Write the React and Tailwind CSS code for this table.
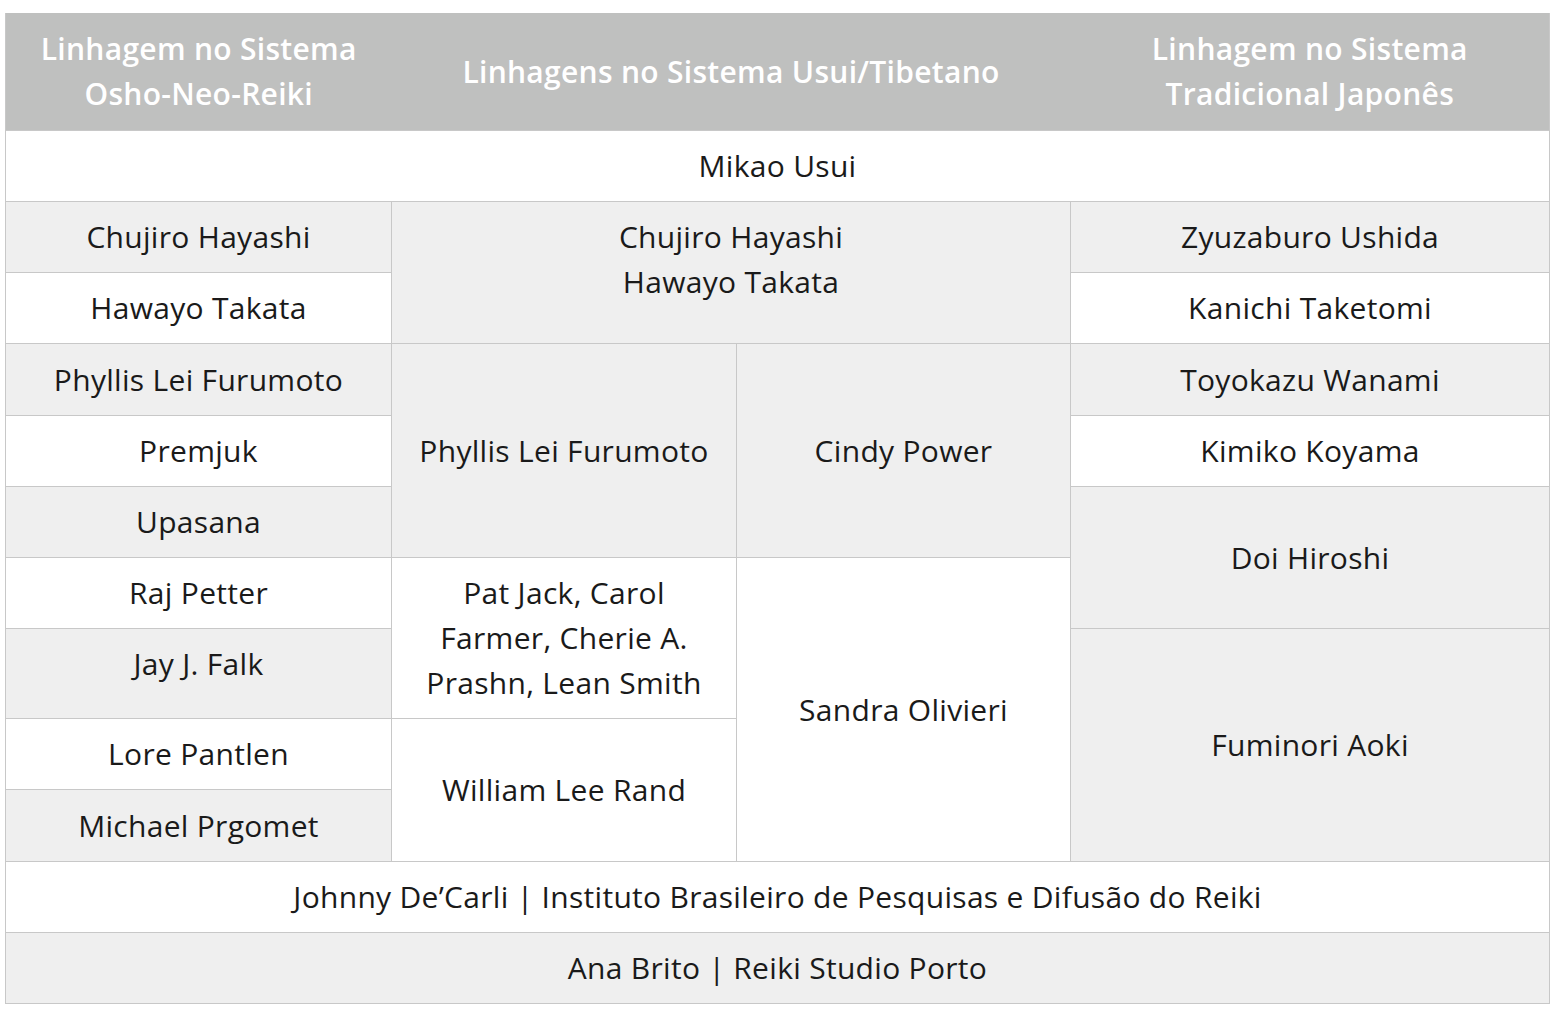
const font = { fontFamily: '"Open Sans", Lato, sans-serif' };

const cell = 'border border-[#c8c8c8] text-center align-middle px-3 leading-[45px]';
const gray = 'bg-[#efefef]';
const white = 'bg-white';
const top = 'align-top pt-[12px]';

export default function App() {
  return (
    <div className="min-h-screen bg-white pl-[5px] pt-[13px]" style={font}>
      <table className="table-fixed border-collapse w-[1544px] text-[30px] tracking-[0.3px] text-[#1a1a1a]">
        <colgroup>
          <col className="w-[386px]" />
          <col className="w-[345px]" />
          <col className="w-[334px]" />
          <col className="w-[479px]" />
        </colgroup>
        <thead>
          <tr className="h-[117px] bg-[#bfc0bf] text-white border-b border-b-[#8f8f8f]">
            <th className="align-middle text-center leading-[45px] font-semibold border-l border-l-[#c8c8c8]">
              Linhagem no Sistema<br />Osho-Neo-Reiki
            </th>
            <th colSpan={2} className="align-middle text-center leading-[45px] font-semibold">
              Linhagens no Sistema Usui/Tibetano
            </th>
            <th className="align-middle text-center leading-[45px] font-semibold border-r border-r-[#c8c8c8]">
              Linhagem no Sistema<br />Tradicional Japonês
            </th>
          </tr>
        </thead>
        <tbody>
          <tr className="h-[71px]">
            <td colSpan={4} className={`${cell} ${white}`}>Mikao Usui</td>
          </tr>
          <tr className="h-[71px]">
            <td className={`${cell} ${gray}`}>Chujiro Hayashi</td>
            <td colSpan={2} rowSpan={2} className={`${cell} ${gray} ${top}`}>
              Chujiro Hayashi<br />Hawayo Takata
            </td>
            <td className={`${cell} ${gray}`}>Zyuzaburo Ushida</td>
          </tr>
          <tr className="h-[71px]">
            <td className={`${cell} ${white}`}>Hawayo Takata</td>
            <td className={`${cell} ${white}`}>Kanichi Taketomi</td>
          </tr>
          <tr className="h-[72px]">
            <td className={`${cell} ${gray}`}>Phyllis Lei Furumoto</td>
            <td rowSpan={3} className={`${cell} ${gray}`}>Phyllis Lei Furumoto</td>
            <td rowSpan={3} className={`${cell} ${gray}`}>Cindy Power</td>
            <td className={`${cell} ${gray}`}>Toyokazu Wanami</td>
          </tr>
          <tr className="h-[71px]">
            <td className={`${cell} ${white}`}>Premjuk</td>
            <td className={`${cell} ${white}`}>Kimiko Koyama</td>
          </tr>
          <tr className="h-[71px]">
            <td className={`${cell} ${gray}`}>Upasana</td>
            <td rowSpan={2} className={`${cell} ${gray}`}>Doi Hiroshi</td>
          </tr>
          <tr className="h-[71px]">
            <td className={`${cell} ${white}`}>Raj Petter</td>
            <td rowSpan={2} className={`${cell} ${white}`}>
              Pat Jack, Carol<br />Farmer, Cherie A.<br />Prashn, Lean Smith
            </td>
            <td rowSpan={4} className={`${cell} ${white}`}>Sandra Olivieri</td>
          </tr>
          <tr className="h-[90px]">
            <td className={`${cell} ${gray} ${top}`}>Jay J. Falk</td>
            <td rowSpan={3} className={`${cell} ${gray}`}>Fuminori Aoki</td>
          </tr>
          <tr className="h-[71px]">
            <td className={`${cell} ${white}`}>Lore Pantlen</td>
            <td rowSpan={2} className={`${cell} ${white}`}>William Lee Rand</td>
          </tr>
          <tr className="h-[72px]">
            <td className={`${cell} ${gray}`}>Michael Prgomet</td>
          </tr>
          <tr className="h-[71px]">
            <td colSpan={4} className={`${cell} ${white}`}>
              Johnny De’Carli | Instituto Brasileiro de Pesquisas e Difusão do Reiki
            </td>
          </tr>
          <tr className="h-[71px]">
            <td colSpan={4} className={`${cell} ${gray}`}>Ana Brito | Reiki Studio Porto</td>
          </tr>
        </tbody>
      </table>
    </div>
  );
}
